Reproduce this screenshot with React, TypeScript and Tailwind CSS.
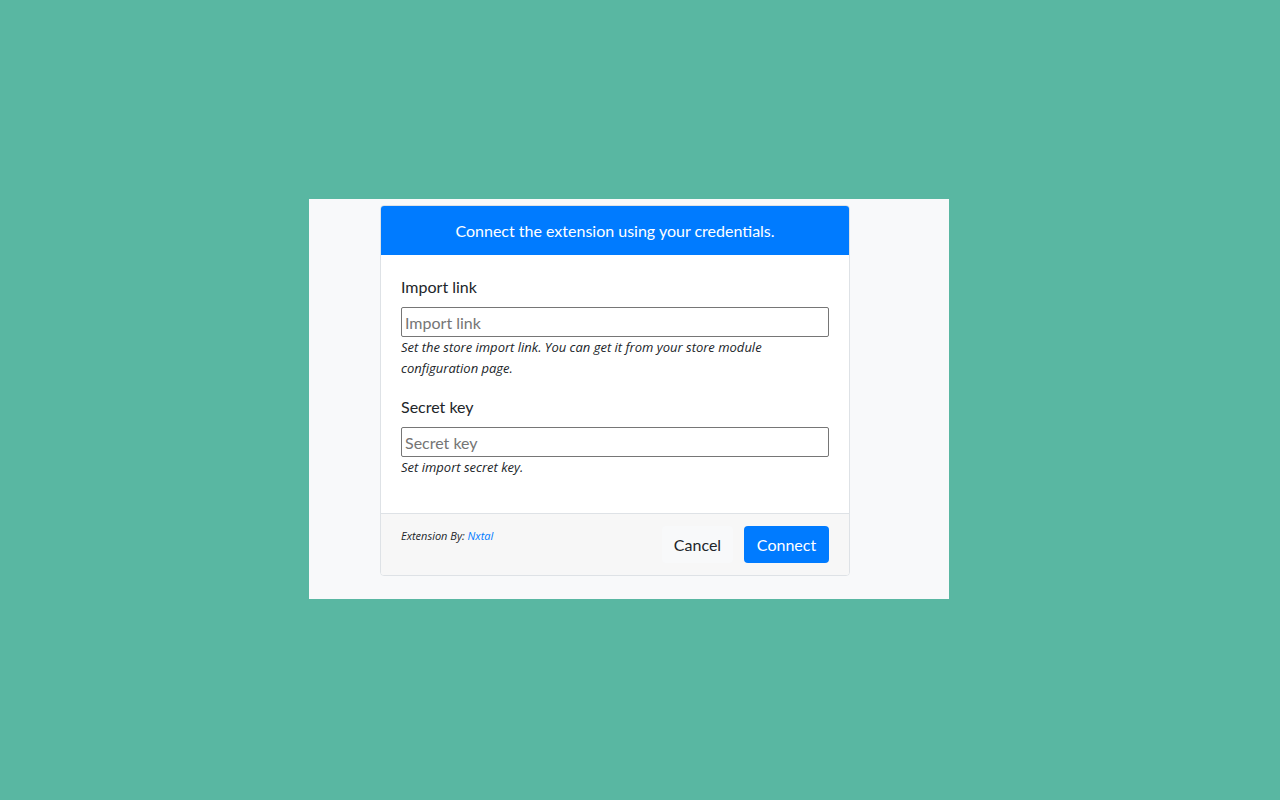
export default function App() {
  return (
    <main
      className="flex min-h-screen w-full items-center justify-center bg-[#59b7a2] pr-[22px] pb-[2px] text-[#212529]"
      style={{ fontFamily: "Lato, 'Open Sans', sans-serif" }}
    >
      <div className="flex h-[400px] w-[640px] shrink-0 bg-[#f8f9fa] pt-[6px] pl-[71px]">
        <div className="flex h-[371px] w-[470px] flex-col overflow-hidden rounded-[4px] border border-[#dee2e6] bg-white">
          <div className="flex h-[49px] shrink-0 items-center justify-center bg-[#007bff] text-[16px] text-white">
            Connect the extension using your credentials.
          </div>

          <div className="flex-1 px-[20px] pt-[20px]">
            <div className="mb-[16px]">
              <label className="mb-[8px] block text-[16px] leading-[24px]">Import link</label>
              <input
                className="block h-[30px] w-full rounded-[2px] border border-[#767676] px-[3px] text-[16px] placeholder:text-[#757575] outline-none"
                placeholder="Import link"
              />
              <p className="font-['Open_Sans'] text-[13px] italic leading-[21px]">
                Set the store import link. You can get it from your store module configuration page.
              </p>
            </div>

            <div className="mb-[16px]">
              <label className="mb-[8px] block text-[16px] leading-[24px]">Secret key</label>
              <input
                className="block h-[30px] w-full rounded-[2px] border border-[#767676] px-[3px] text-[16px] placeholder:text-[#757575] outline-none"
                placeholder="Secret key"
              />
              <p className="font-['Open_Sans'] text-[13px] italic leading-[21px]">Set import secret key.</p>
            </div>
          </div>

          <div className="flex h-[62px] shrink-0 items-start justify-between border-t border-[#dee2e6] bg-[#f7f7f7] px-[20px] pt-[12px]">
            <span className="font-['Open_Sans'] text-[11px] italic leading-[20px]">
              Extension By: <a className="text-[#007bff]">Nxtal</a>
            </span>
            <div className="flex gap-[11px]">
              <button className="h-[37px] w-[71px] rounded-[4px] bg-[#f8f9fa] text-[16px]">Cancel</button>
              <button className="h-[37px] w-[85px] rounded-[4px] bg-[#007bff] text-[16px] text-white">
                Connect
              </button>
            </div>
          </div>
        </div>
      </div>
    </main>
  );
}
